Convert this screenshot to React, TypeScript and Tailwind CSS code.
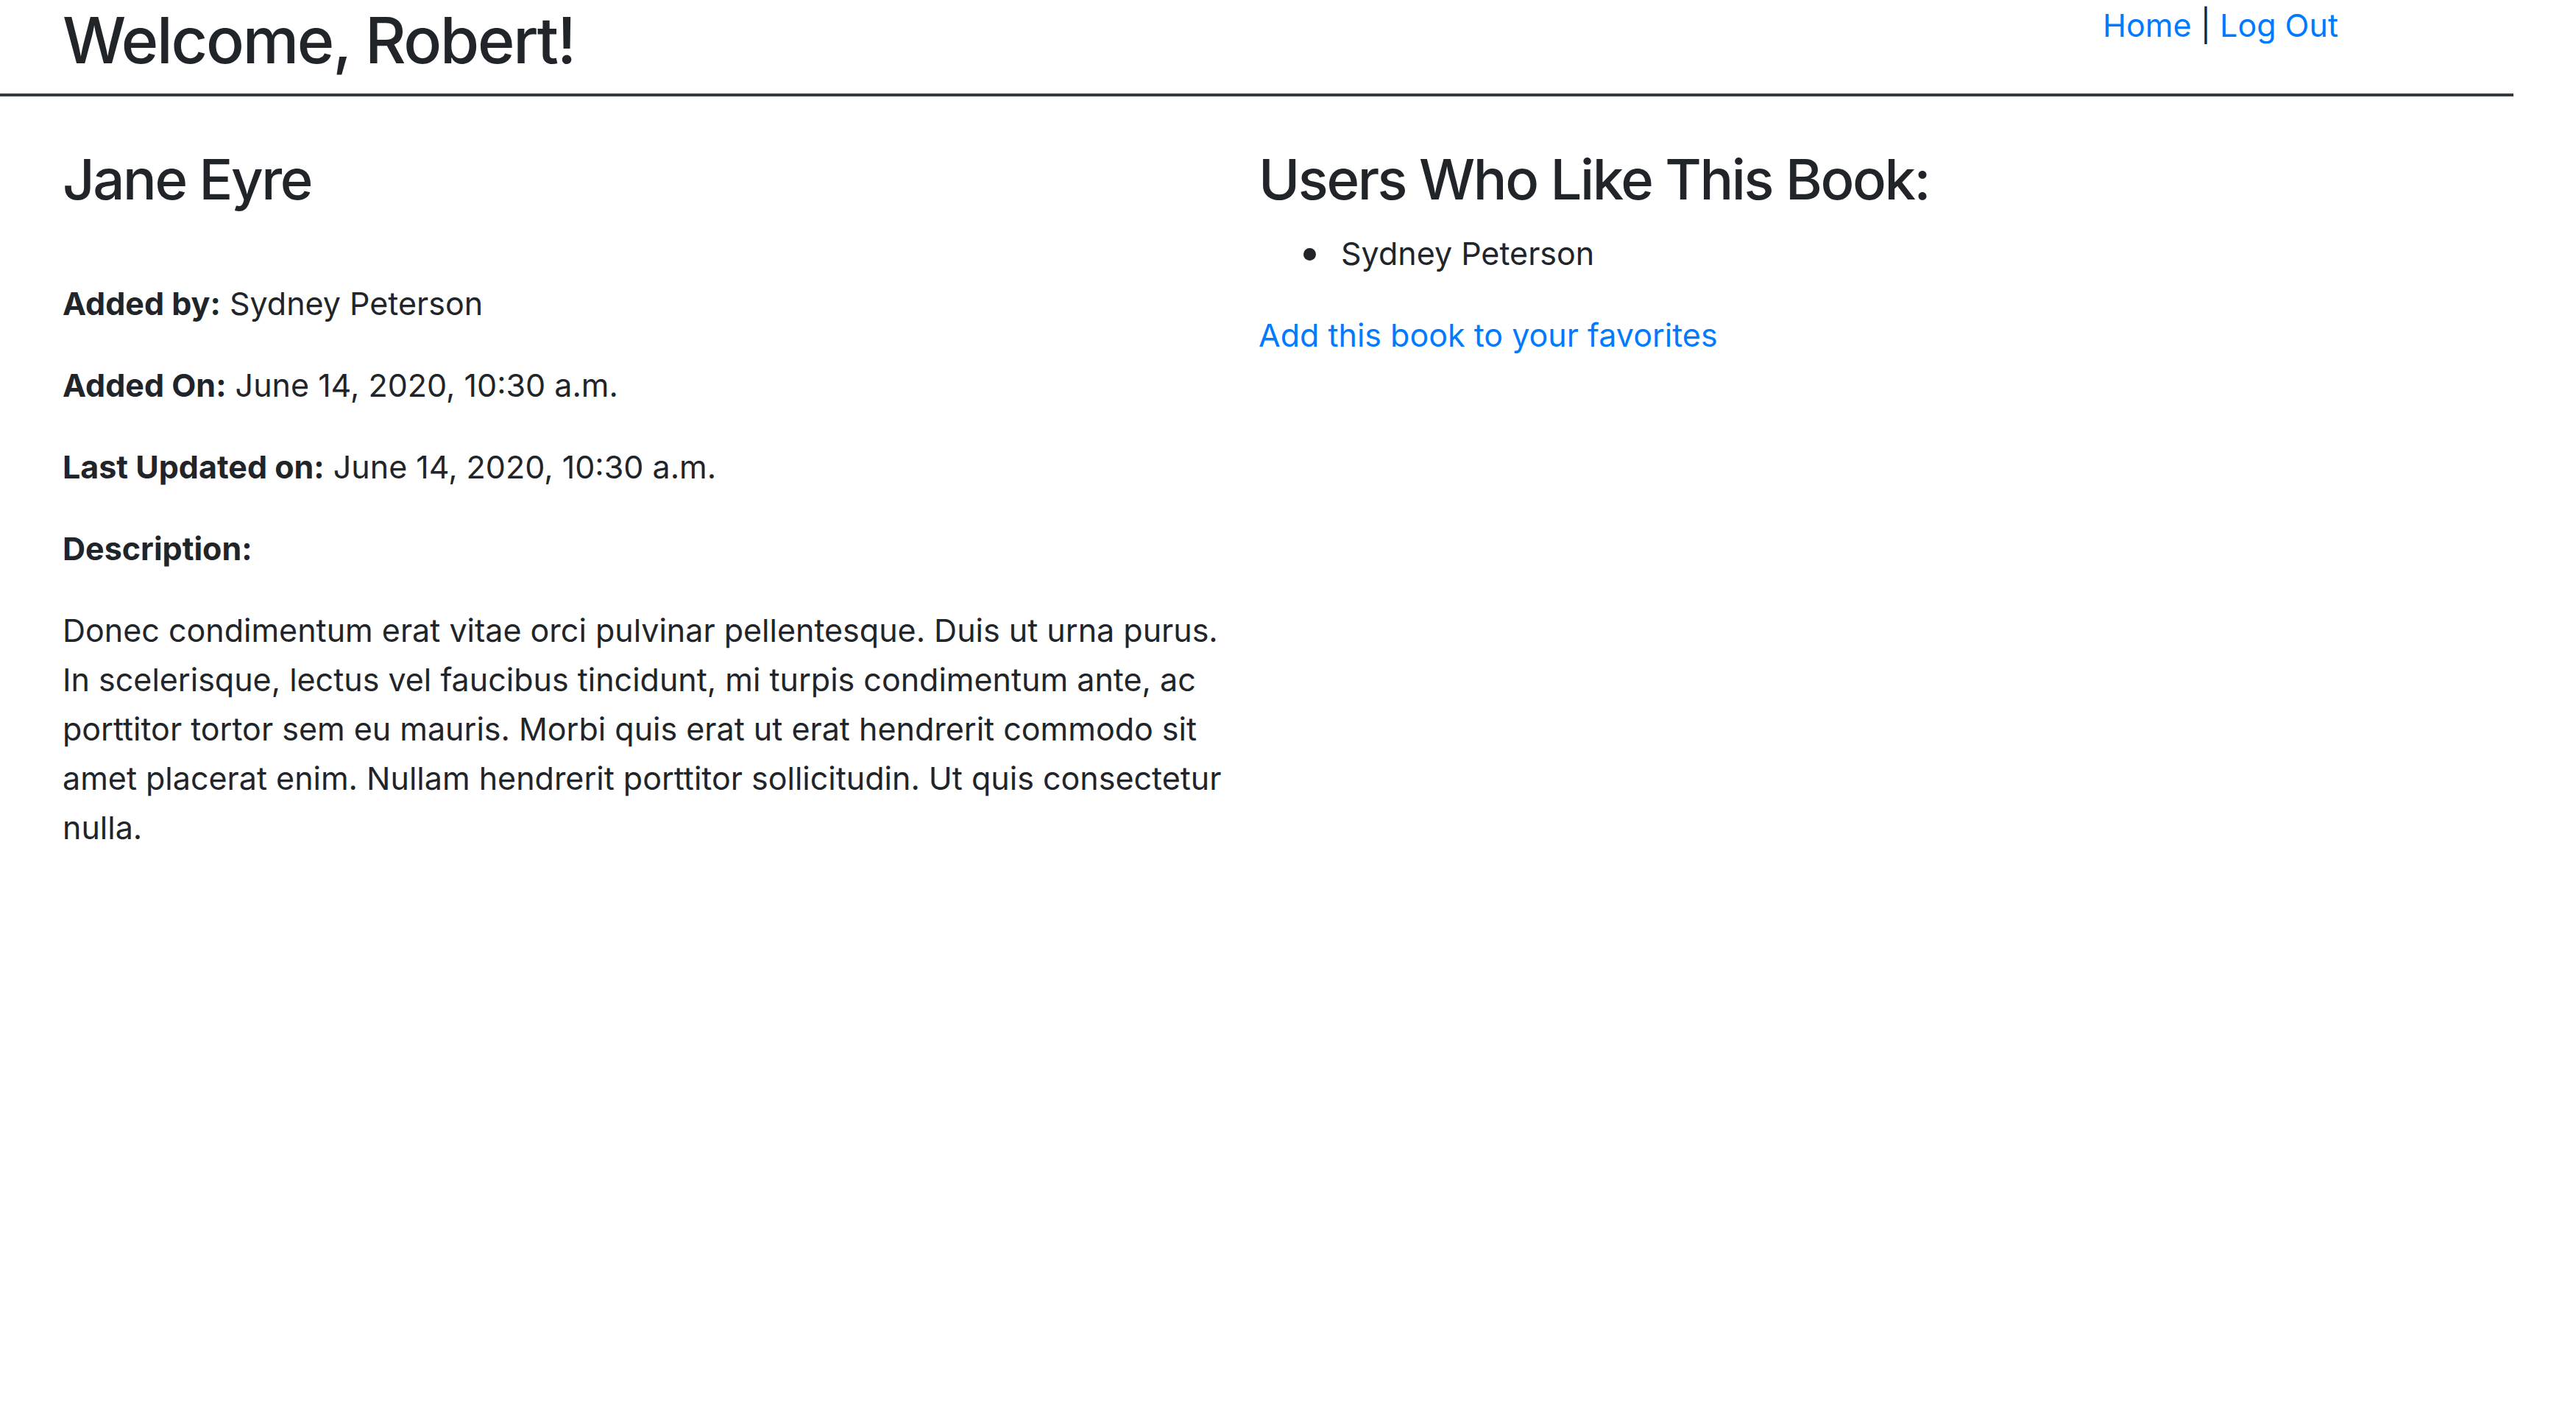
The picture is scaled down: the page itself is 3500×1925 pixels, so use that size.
import React from "react";

export default function App() {
  return (
    <div className="min-h-[1925px] w-[3500px] bg-white font-['Inter','Liberation_Sans',sans-serif] text-[#212529]">
      <header className="flex h-[131px] w-[3415px] items-start border-b-4 border-[#343a40] pl-[85px] pr-[238px]">
        <h1 className="mt-[5px] text-[86px] font-medium leading-[100px] tracking-[-2.2px]">Welcome, Robert!</h1>
        <nav className="ml-auto mt-[1px] text-[43px] leading-[67px]">
          <a className="text-[#007bff]" href="#">Home</a>
          <span> | </span>
          <a className="text-[#007bff]" href="#">Log Out</a>
        </nav>
      </header>
      <main className="flex pl-[85px] pt-[67px] text-[43px] leading-[67px]">
        <section className="w-[1625px] pr-[35px]">
          <h2 className="mb-[90px] text-[76px] font-medium leading-[91px] tracking-[-2.4px]">Jane Eyre</h2>
          <p className="mb-[44px]"><span className="font-bold">Added by:</span> Sydney Peterson</p>
          <p className="mb-[44px]"><span className="font-bold">Added On:</span> June 14, 2020, 10:30 a.m.</p>
          <p className="mb-[44px]"><span className="font-bold">Last Updated on:</span> June 14, 2020, 10:30 a.m.</p>
          <p className="mb-[44px] font-bold">Description:</p>
          <p>
            Donec condimentum erat vitae orci pulvinar pellentesque. Duis ut urna purus. In scelerisque, lectus vel faucibus tincidunt, mi turpis condimentum ante, ac porttitor tortor sem eu mauris. Morbi quis erat ut erat hendrerit commodo sit amet placerat enim. Nullam hendrerit porttitor sollicitudin. Ut quis consectetur nulla.
          </p>
        </section>
        <section>
          <h2 className="mb-[22px] text-[76px] font-medium leading-[91px] tracking-[-2.4px]">Users Who Like This Book:</h2>
          <ul className="mb-[44px] pl-[61px]">
            <li className="flex items-center gap-[34px]">
              <span className="mt-[2px] h-[17px] w-[17px] rounded-full bg-[#212529]" />
              <span>Sydney Peterson</span>
            </li>
          </ul>
          <a className="text-[#007bff]" href="#">Add this book to your favorites</a>
        </section>
      </main>
    </div>
  );
}
